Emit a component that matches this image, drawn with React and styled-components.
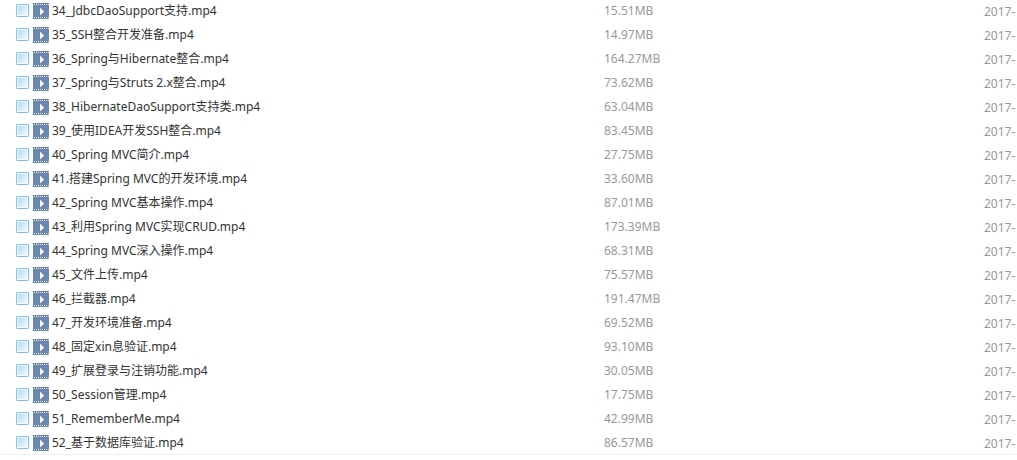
import React from "react";
import styled, { createGlobalStyle } from "styled-components";

const GlobalStyle = createGlobalStyle`
  body {
    margin: 0;
    background: #fff;
    overflow: hidden;
    font-family: "Noto Sans", "Noto Sans CJK SC", sans-serif;
    font-size: 12px;
    line-height: 16px;
    color: #333;
  }
`;

const FileTable = styled.table`
  width: 100%;
  margin-top: -1px;
  table-layout: fixed;
  border-collapse: separate;
  border-spacing: 0;
`;

const SizeCol = styled.col`
  width: 380px;
`;

const DateCol = styled.col`
  width: 33px;
`;

const Row = styled.tr`
  &:last-child td {
    box-shadow: inset 0 -1px #f0f0f0;
  }
`;

const Cell = styled.td`
  height: 24px;
  padding: 0;
  line-height: 24px;
  white-space: nowrap;
  overflow: hidden;
  vertical-align: top;
`;

const SizeCell = styled(Cell)`
  color: #999;
`;

const DateCell = styled(Cell)`
  color: #999;
  line-height: 26px;

  time {
    display: block;
    height: 24px;
  }
`;

const FileLabel = styled.label`
  display: flex;
  align-items: center;
  height: 24px;
  padding-left: 16px;
`;

const Check = styled.input`
  appearance: none;
  box-sizing: border-box;
  flex: none;
  width: 13px;
  height: 13px;
  margin: 0 4px 1px 0;
  padding: 1px;
  border: 1px solid #7cc5ea;
  border-radius: 1px;
  background: linear-gradient(135deg, #b4daea, #eefaff) content-box, #fff;
`;

const FilmSvg = styled.svg`
  flex: none;
  width: 16px;
  height: 16px;
  margin-right: 3px;
`;

function FilmIcon() {
  return (
    <FilmSvg viewBox="0 0 16 16" aria-hidden="true">
      <rect width="16" height="16" fill="#6a88ad" />
      <path
        d="M1 1.5H16M1 14.5H16"
        stroke="#e4ebf3"
        strokeDasharray="1 1"
        shapeRendering="crispEdges"
      />
      <path d="M7 4.5L11 8.5L7 12.5Z" fill="#fff" />
    </FilmSvg>
  );
}

const files = [
  ["34_JdbcDaoSupport支持.mp4", "15.51MB"],
  ["35_SSH整合开发准备.mp4", "14.97MB"],
  ["36_Spring与Hibernate整合.mp4", "164.27MB"],
  ["37_Spring与Struts 2.x整合.mp4", "73.62MB"],
  ["38_HibernateDaoSupport支持类.mp4", "63.04MB"],
  ["39_使用IDEA开发SSH整合.mp4", "83.45MB"],
  ["40_Spring MVC简介.mp4", "27.75MB"],
  ["41.搭建Spring MVC的开发环境.mp4", "33.60MB"],
  ["42_Spring MVC基本操作.mp4", "87.01MB"],
  ["43_利用Spring MVC实现CRUD.mp4", "173.39MB"],
  ["44_Spring MVC深入操作.mp4", "68.31MB"],
  ["45_文件上传.mp4", "75.57MB"],
  ["46_拦截器.mp4", "191.47MB"],
  ["47_开发环境准备.mp4", "69.52MB"],
  ["48_固定xin息验证.mp4", "93.10MB"],
  ["49_扩展登录与注销功能.mp4", "30.05MB"],
  ["50_Session管理.mp4", "17.75MB"],
  ["51_RememberMe.mp4", "42.99MB"],
  ["52_基于数据库验证.mp4", "86.57MB"],
];

export default function App() {
  return (
    <>
      <GlobalStyle />
      <FileTable>
        <colgroup>
          <col />
          <SizeCol />
          <DateCol />
        </colgroup>
        <tbody>
          {files.map(([name, size]) => (
            <Row key={name}>
              <Cell>
                <FileLabel>
                  <Check type="checkbox" />
                  <FilmIcon />
                  {name}
                </FileLabel>
              </Cell>
              <SizeCell>{size}</SizeCell>
              <DateCell>
                <time>2017-</time>
              </DateCell>
            </Row>
          ))}
        </tbody>
      </FileTable>
    </>
  );
}
